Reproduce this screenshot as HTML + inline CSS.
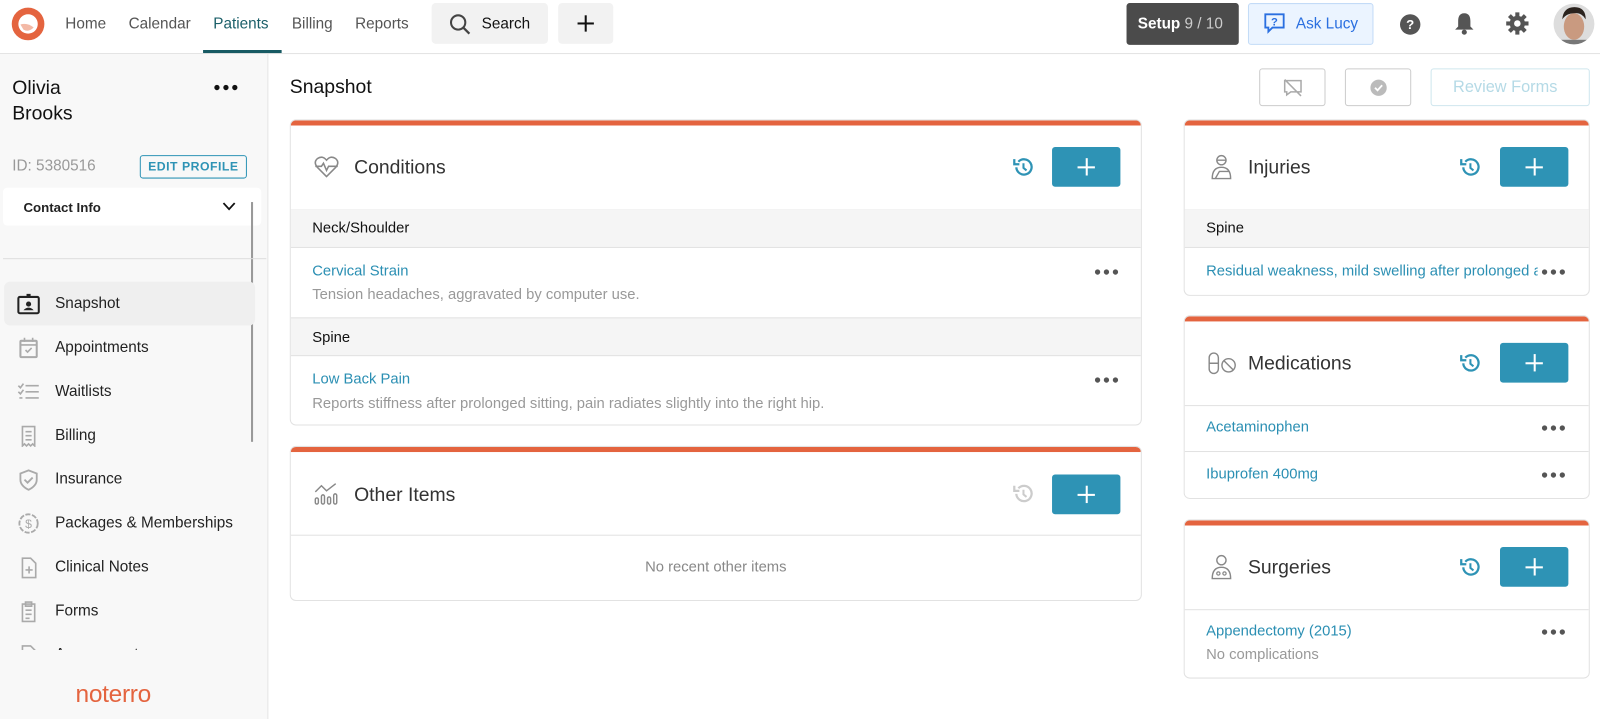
<!DOCTYPE html>
<html><head><meta charset="utf-8"><style>
*{box-sizing:border-box;margin:0;padding:0}
html,body{width:1600px;height:719px;overflow:hidden}
body{font-family:"Liberation Sans",sans-serif;background:#fff;color:#222;position:relative}
#w{position:absolute;left:0;top:0;width:1568px;height:705px;transform:scale(1.020408);transform-origin:0 0}
.a{position:absolute}
.top{left:0;top:0;width:1568px;height:53px;border-bottom:1px solid #e3e3e3;background:#fff}
.nav{font-size:15px;color:#555;top:15px}
.side{left:0;top:53px;width:263px;height:652px;background:#f8f8f8;border-right:1px solid #e6e6e6}
.mi{position:absolute;left:4px;width:246px;height:43px;font-size:15px;color:#222;display:flex;align-items:center;padding-left:50px;border-radius:6px}
.mi svg{position:absolute;left:12px;top:11px}
.card{position:absolute;background:#fff;border:1px solid #e2e2e2;border-radius:6px;overflow:hidden}
.card:before{content:"";position:absolute;left:0;top:0;right:0;height:5px;background:#e4643f}
.ch{position:absolute;left:0;right:0;top:0;border-bottom:1px solid #e2e2e2}
.ct{position:absolute;font-size:19px;color:#333;left:62px}
.plus{position:absolute;width:67px;height:39px;background:#2e93b5;border-radius:3px;color:#fff}
.plus:before{content:"";position:absolute;left:33px;top:11px;width:1.5px;height:17px;background:#fff}
.plus:after{content:"";position:absolute;left:25px;top:19px;width:17px;height:1.5px;background:#fff}
.grp{position:absolute;left:0;right:0;height:38px;background:#f5f5f5;border-bottom:1px solid #e2e2e2;font-size:14.5px;color:#111;padding:11px 0 0 21px}
.it{position:absolute;left:21px;font-size:14.5px;color:#2b8fb3}
.sub{position:absolute;left:21px;font-size:14.5px;color:#999}
.dots{position:absolute;font-size:12px;color:#555;letter-spacing:1.5px}
.sep{position:absolute;left:0;right:0;height:1px;background:#e2e2e2}
.ob{position:absolute;top:67px;height:37px;border:1px solid #ccc;border-radius:3px;background:#fff}
</style></head><body><div id="w">
<div class="a top">
 <svg class="a" style="left:11px;top:7px" width="33" height="33" viewBox="0 0 33 33"><circle cx="16.5" cy="16.5" r="16" fill="#e4643f"/><circle cx="16.5" cy="16.5" r="9.5" fill="#fff"/><path d="M9 17 Q16 15 22 20 Q17 25 12 22 Z" fill="#f3b9a6"/></svg>
 <div class="a nav" style="left:64px">Home</div>
 <div class="a nav" style="left:126px">Calendar</div>
 <div class="a nav" style="left:209px;color:#1b5f69">Patients</div>
 <div class="a" style="left:199px;top:49px;width:77px;height:3px;background:#175a63"></div>
 <div class="a nav" style="left:286px">Billing</div>
 <div class="a nav" style="left:348px">Reports</div>
 <div class="a" style="left:423px;top:3px;width:114px;height:40px;background:#f2f2f2;border-radius:4px"></div>
 <svg class="a" style="left:440px;top:13px" width="22" height="22" viewBox="0 0 22 22"><circle cx="9" cy="9" r="7" fill="none" stroke="#444" stroke-width="2"/><path d="M14 14 L20 20" stroke="#444" stroke-width="2.2"/></svg>
 <div class="a nav" style="left:472px;color:#111">Search</div>
 <div class="a" style="left:547px;top:3px;width:54px;height:40px;background:#f2f2f2;border-radius:4px"></div>
 <div class="a" style="left:566px;top:22px;width:16px;height:2px;background:#111"></div>
 <div class="a" style="left:573px;top:15px;width:2px;height:16px;background:#111"></div>
 <div class="a" style="left:1104px;top:3px;width:110px;height:41px;background:#4b4b4b;border-radius:3px;color:#fff;font-size:15px;padding:12px 0 0 11px"><b>Setup</b> <span style="color:#ccc">9 / 10</span></div>
 <div class="a" style="left:1223px;top:3px;width:123px;height:41px;background:#ebf4ff;border:1px solid #c3dbf7;border-radius:3px;color:#2a6fe0;font-size:15px;padding:11px 0 0 46px">Ask Lucy</div>
 <svg class="a" style="left:1238px;top:12px" width="22" height="22" viewBox="0 0 22 22"><path d="M2 2 H20 V15 H9 L5 19 V15 H2 Z" fill="none" stroke="#2a6fe0" stroke-width="1.8"/><text x="11" y="13" font-size="11" font-weight="bold" fill="#2a6fe0" text-anchor="middle" font-family="Liberation Sans">?</text></svg>
 <svg class="a" style="left:1371px;top:13px" width="22" height="22"><circle cx="11" cy="11" r="10" fill="#555"/><text x="11" y="15.5" font-size="13" font-weight="bold" fill="#fff" text-anchor="middle" font-family="Liberation Sans">?</text></svg>
 <svg class="a" style="left:1424px;top:11px" width="22" height="24" viewBox="0 0 22 24"><path d="M11 2 C6 2 5 6 5 10 V15 L2 18 H20 L17 15 V10 C17 6 16 2 11 2Z" fill="#555"/><circle cx="11" cy="20.5" r="2.5" fill="#555"/></svg>
 <svg class="a" style="left:1476px;top:12px" width="22" height="22" viewBox="0 0 22 22"><g fill="#555"><circle cx="11" cy="11" r="7.5"/><rect x="9" y="0" width="4" height="22"/><rect x="0" y="9" width="22" height="4"/><rect x="9" y="0" width="4" height="22" transform="rotate(45 11 11)"/><rect x="9" y="0" width="4" height="22" transform="rotate(-45 11 11)"/></g><circle cx="11" cy="11" r="3.2" fill="#fff"/></svg>
 <svg class="a" style="left:1522px;top:3px" width="41" height="41"><defs><clipPath id="c"><circle cx="20.5" cy="20.5" r="20"/></clipPath></defs><g clip-path="url(#c)"><rect width="41" height="41" fill="#ddd"/><ellipse cx="20.5" cy="23" rx="10" ry="13" fill="#c99a80"/><path d="M9 16 Q10 4 21 4 Q32 4 32 16 Q28 9 21 10 Q13 10 9 16Z" fill="#2b231e"/><rect x="5" y="36" width="31" height="6" fill="#777"/></g></svg>
</div>

<div class="a side">
 <div class="a" style="left:12px;top:21px;font-size:19px;line-height:25px;color:#111">Olivia<br>Brooks</div>
 <div class="a" style="left:209px;top:25px;font-size:12px;letter-spacing:1.5px;color:#111">&#9679;&#9679;&#9679;</div>
 <div class="a" style="left:12px;top:101px;font-size:15px;color:#999">ID: 5380516</div>
 <div class="a" style="left:137px;top:99px;width:105px;height:23px;border:1px solid #2e93b5;border-radius:3px;color:#2e93b5;font-size:12px;font-weight:bold;text-align:center;line-height:21px;letter-spacing:.5px">EDIT PROFILE</div>
 <div class="a" style="left:3px;top:131px;width:253px;height:37px;background:#fff;border-radius:4px;font-size:13px;font-weight:bold;padding:12px 0 0 20px">Contact Info</div>
 <svg class="a" style="left:218px;top:145px" width="13" height="9"><path d="M1 1 L6.5 7 L12 1" fill="none" stroke="#111" stroke-width="1.8"/></svg>
 <div class="a" style="left:246px;top:145px;width:2px;height:235px;background:#999"></div>
 <div class="a" style="left:3px;top:200px;width:258px;height:1px;background:#ddd"></div>
 <div class="a" style="left:0;top:0;width:262px;height:584px;overflow:hidden">
 <div class="mi" style="top:223px;background:#efefef"><svg width="24" height="22" viewBox="0 0 24 22"><rect x="2" y="4" width="20" height="16" rx="1.5" fill="none" stroke="#222" stroke-width="2"/><rect x="10" y="1" width="4" height="4" fill="#222"/><circle cx="12" cy="11" r="2.5" fill="#222"/><path d="M7 17 Q12 12 17 17Z" fill="#222"/></svg>Snapshot</div>
 <div class="mi" style="top:266px"><svg width="24" height="22"><rect x="4" y="4" width="16" height="16" rx="1" fill="none" stroke="#aaa" stroke-width="2"/><path d="M4 8 H20 M8 1 V5 M16 1 V5 M9 13 L11 15 L15 11" stroke="#aaa" stroke-width="1.6" fill="none"/></svg>Appointments</div>
 <div class="mi" style="top:309px"><svg width="24" height="22"><path d="M9 5 H22 M9 11 H22 M9 17 H22 M2 5 L4 7 L7 3 M2 11 L4 13 L7 9 M3 17 H6" stroke="#aaa" stroke-width="1.6" fill="none"/></svg>Waitlists</div>
 <div class="mi" style="top:352px"><svg width="24" height="22"><path d="M6 2 H18 V21 L16 19 L14 21 L12 19 L10 21 L8 19 L6 21Z M9 7 H15 M9 11 H15 M9 15 H15" stroke="#aaa" stroke-width="1.6" fill="none"/></svg>Billing</div>
 <div class="mi" style="top:395px"><svg width="24" height="22"><path d="M12 2 L20 5 V11 Q20 17 12 21 Q4 17 4 11 V5Z M8 11 L11 14 L16 9" stroke="#aaa" stroke-width="1.8" fill="none"/></svg>Insurance</div>
 <div class="mi" style="top:438px"><svg width="24" height="22"><circle cx="12" cy="11" r="9" fill="none" stroke="#aaa" stroke-width="1.8" stroke-dasharray="5 1.5"/><text x="12" y="15.5" font-size="12" fill="#aaa" text-anchor="middle" font-family="Liberation Sans">$</text></svg>Packages &amp; Memberships</div>
 <div class="mi" style="top:481px"><svg width="24" height="22"><path d="M6 2 H14 L19 7 V21 H6Z M12.5 10 V17 M9 13.5 H16" stroke="#aaa" stroke-width="1.6" fill="none"/></svg>Clinical Notes</div>
 <div class="mi" style="top:524px"><svg width="24" height="22"><path d="M6 4 H18 V21 H6Z M9 2 H15 V6 H9Z M9 10 H15 M9 14 H15 M9 18 H13" stroke="#aaa" stroke-width="1.6" fill="none"/></svg>Forms</div>
 <div class="mi" style="top:567px"><svg width="24" height="22"><path d="M6 2 H14 L19 7 V21 H6Z" stroke="#aaa" stroke-width="1.6" fill="none"/></svg>Assessments</div>
 </div>
 <div class="a" style="left:74px;top:614px;font-size:24px;color:#e4643f;letter-spacing:-0.3px">noterro</div>
</div>

<div class="a" style="left:284px;top:75px;font-size:19px;color:#111">Snapshot</div>
<div class="ob" style="left:1234px;width:65px"><svg class="a" style="left:22px;top:9px" width="20" height="18"><path d="M2 2 H18 V13 H8 L4 16 V13 H2Z M2 1 L18 17" stroke="#aaa" stroke-width="1.5" fill="none"/></svg></div>
<div class="ob" style="left:1318px;width:65px"><svg class="a" style="left:23px;top:9px" width="18" height="18"><circle cx="9" cy="9" r="8" fill="#bbb"/><path d="M5.5 9 L8 11.5 L12.5 6.5" stroke="#fff" stroke-width="1.8" fill="none"/></svg></div>
<div class="ob" style="left:1402px;width:156px;border-color:#cfe6ee;color:#b5dae6;font-size:16px;padding:9px 0 0 21px">Review Forms</div>

<div class="card" style="left:284px;top:117px;width:835px;height:300px">
 <div class="ch" style="height:88px"></div>
 <svg class="a" style="left:22px;top:34px" width="26" height="24"><path d="M13 21 L4 12 Q0 7 4 3.5 Q9 0 13 5 Q17 0 22 3.5 Q26 7 22 12Z" fill="none" stroke="#888" stroke-width="1.5"/><path d="M2 11 H8 L10 8 L13 15 L15 11 H24" fill="none" stroke="#888" stroke-width="1.5"/></svg>
 <div class="ct" style="top:36px">Conditions</div>
 <svg class="a" style="left:707px;top:35px" width="22" height="22"><path d="M4 11 A7.5 7.5 0 1 0 6 5.5" fill="none" stroke="#2e93b5" stroke-width="2.2"/><path d="M2 3 V8 H7" fill="none" stroke="#2e93b5" stroke-width="2.2"/><path d="M11 7 V11.5 L14 14" fill="none" stroke="#2e93b5" stroke-width="2"/></svg>
 <div class="plus" style="left:746px;top:26px"></div>
 <div class="grp" style="top:87px">Neck/Shoulder</div>
 <div class="it" style="top:140px">Cervical Strain</div>
 <div class="sub" style="top:163px">Tension headaches, aggravated by computer use.</div>
 <div class="dots" style="left:787px;top:141px">&#9679;&#9679;&#9679;</div>
 <div class="grp" style="top:193px;border-top:1px solid #e2e2e2">Spine</div>
 <div class="it" style="top:246px">Low Back Pain</div>
 <div class="sub" style="top:270px">Reports stiffness after prolonged sitting, pain radiates slightly into the right hip.</div>
 <div class="dots" style="left:787px;top:247px">&#9679;&#9679;&#9679;</div>
</div>

<div class="card" style="left:284px;top:437px;width:835px;height:152px">
 <div class="ch" style="height:87px"></div>
 <svg class="a" style="left:22px;top:34px" width="26" height="24"><path d="M2 10 L8 4 L13 9 L22 2" fill="none" stroke="#888" stroke-width="1.4"/><g fill="none" stroke="#888" stroke-width="1.4"><rect x="2" y="16" width="3" height="6" rx="1.5"/><rect x="8" y="13" width="3" height="9" rx="1.5"/><rect x="14" y="15" width="3" height="7" rx="1.5"/><rect x="20" y="12" width="3" height="10" rx="1.5"/></g></svg>
 <div class="ct" style="top:37px">Other Items</div>
 <svg class="a" style="left:707px;top:35px" width="22" height="22"><path d="M4 11 A7.5 7.5 0 1 0 6 5.5" fill="none" stroke="#ccc" stroke-width="2.2"/><path d="M2 3 V8 H7" fill="none" stroke="#ccc" stroke-width="2.2"/><path d="M11 7 V11.5 L14 14" fill="none" stroke="#ccc" stroke-width="2"/></svg>
 <div class="plus" style="left:746px;top:27px"></div>
 <div class="a" style="left:0;right:0;top:110px;text-align:center;font-size:14.5px;color:#888">No recent other items</div>
</div>

<div class="card" style="left:1160px;top:117px;width:398px;height:173px">
 <div class="ch" style="height:88px"></div>
 <svg class="a" style="left:24px;top:33px" width="24" height="26"><circle cx="12" cy="6" r="4.5" fill="none" stroke="#888" stroke-width="1.4"/><path d="M7.5 6 H16.5" stroke="#888" stroke-width="1.4"/><path d="M3 24 Q3 13 12 13 Q21 13 21 24Z M6 24 L10 17 H20" fill="none" stroke="#888" stroke-width="1.4"/></svg>
 <div class="ct" style="top:36px">Injuries</div>
 <svg class="a" style="left:269px;top:35px" width="22" height="22"><path d="M4 11 A7.5 7.5 0 1 0 6 5.5" fill="none" stroke="#2e93b5" stroke-width="2.2"/><path d="M2 3 V8 H7" fill="none" stroke="#2e93b5" stroke-width="2.2"/><path d="M11 7 V11.5 L14 14" fill="none" stroke="#2e93b5" stroke-width="2"/></svg>
 <div class="plus" style="left:309px;top:26px"></div>
 <div class="grp" style="top:87px">Spine</div>
 <div class="it" style="top:140px;width:325px;white-space:nowrap;overflow:hidden">Residual weakness, mild swelling after prolonged activity</div>
 <div class="dots" style="left:349px;top:141px">&#9679;&#9679;&#9679;</div>
</div>

<div class="card" style="left:1160px;top:309px;width:398px;height:180px">
 <div class="ch" style="height:88px"></div>
 <svg class="a" style="left:22px;top:34px" width="30" height="24"><rect x="2" y="2" width="9" height="20" rx="4.5" fill="none" stroke="#888" stroke-width="1.4"/><path d="M2 12 H11" stroke="#888" stroke-width="1.4"/><circle cx="21" cy="14" r="6.5" fill="none" stroke="#888" stroke-width="1.4"/><path d="M16.5 9.5 L25.5 18.5" stroke="#888" stroke-width="1.4"/></svg>
 <div class="ct" style="top:36px">Medications</div>
 <svg class="a" style="left:269px;top:35px" width="22" height="22"><path d="M4 11 A7.5 7.5 0 1 0 6 5.5" fill="none" stroke="#2e93b5" stroke-width="2.2"/><path d="M2 3 V8 H7" fill="none" stroke="#2e93b5" stroke-width="2.2"/><path d="M11 7 V11.5 L14 14" fill="none" stroke="#2e93b5" stroke-width="2"/></svg>
 <div class="plus" style="left:309px;top:26px"></div>
 <div class="it" style="top:101px">Acetaminophen</div>
 <div class="dots" style="left:349px;top:102px">&#9679;&#9679;&#9679;</div>
 <div class="sep" style="top:132px"></div>
 <div class="it" style="top:147px">Ibuprofen 400mg</div>
 <div class="dots" style="left:349px;top:148px">&#9679;&#9679;&#9679;</div>
</div>

<div class="card" style="left:1160px;top:509px;width:398px;height:156px">
 <div class="ch" style="height:88px"></div>
 <svg class="a" style="left:24px;top:33px" width="24" height="26"><circle cx="12" cy="6" r="4.5" fill="none" stroke="#888" stroke-width="1.4"/><path d="M3 24 Q3 13 12 13 Q21 13 21 24Z" fill="none" stroke="#888" stroke-width="1.4"/><circle cx="9" cy="19" r="1.6" fill="none" stroke="#888" stroke-width="1.2"/><circle cx="15" cy="19" r="1.6" fill="none" stroke="#888" stroke-width="1.2"/></svg>
 <div class="ct" style="top:36px">Surgeries</div>
 <svg class="a" style="left:269px;top:35px" width="22" height="22"><path d="M4 11 A7.5 7.5 0 1 0 6 5.5" fill="none" stroke="#2e93b5" stroke-width="2.2"/><path d="M2 3 V8 H7" fill="none" stroke="#2e93b5" stroke-width="2.2"/><path d="M11 7 V11.5 L14 14" fill="none" stroke="#2e93b5" stroke-width="2"/></svg>
 <div class="plus" style="left:309px;top:26px"></div>
 <div class="it" style="top:101px">Appendectomy (2015)</div>
 <div class="sub" style="top:124px">No complications</div>
 <div class="dots" style="left:349px;top:102px">&#9679;&#9679;&#9679;</div>
</div>
</div></body></html>
